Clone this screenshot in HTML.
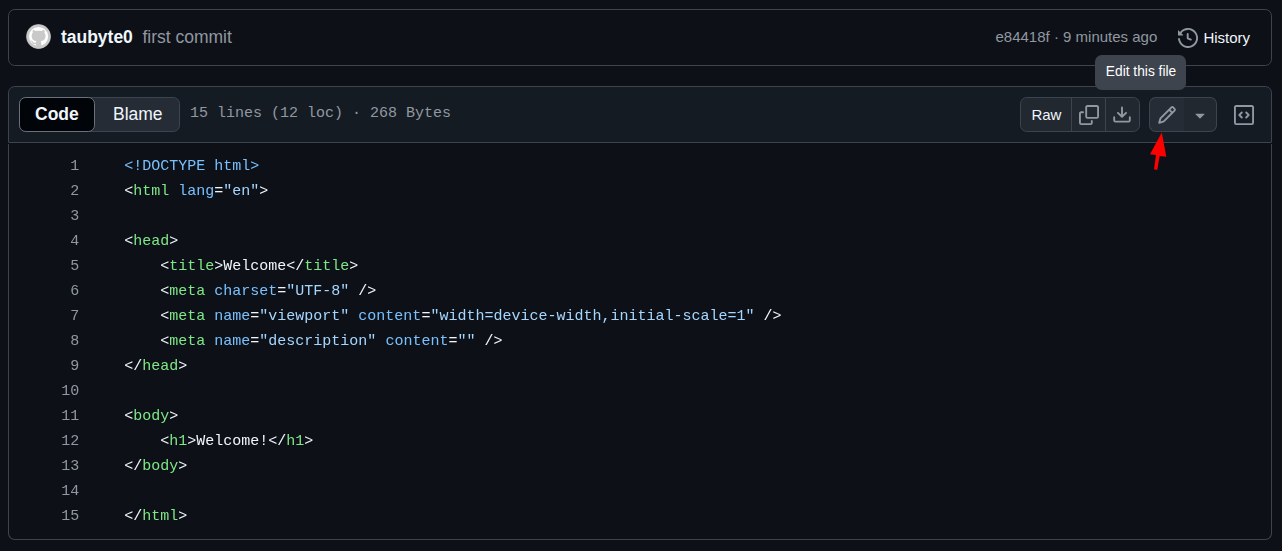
<!DOCTYPE html>
<html lang="en">
<head>
<meta charset="utf-8">
<title>index.html</title>
<style>
*{box-sizing:border-box;margin:0;padding:0}
html,body{width:1282px;height:551px;overflow:hidden;background:#0d1117}
body{position:relative;font-family:"Liberation Sans",Arial,sans-serif;color:#f0f6fc;font-size:17.5px}
.abs{position:absolute}
.commit{left:8px;top:9px;width:1264px;height:57px;border:1px solid #3d444d;border-radius:6.75px;background:#0d1117}
.avatar{left:26px;top:24px;width:25px;height:25px}
.author{left:60.9px;top:26px;font-weight:bold;font-size:17.5px;line-height:22px;white-space:nowrap}
.msg{left:142.4px;top:26px;font-size:17.5px;line-height:22px;color:#9198a1;white-space:nowrap}
.meta{left:995.5px;top:27px;font-size:15px;line-height:20px;color:#9198a1;white-space:nowrap}
.hist-ic{left:1178px;top:28px;width:20px;height:20px;fill:#9198a1}
.hist{left:1203.4px;top:28px;font-size:15px;line-height:20px;color:#f0f6fc;white-space:nowrap}
.file{left:8px;top:144px;width:1264px;height:396px;border:1px solid #3d444d;border-top:0;border-radius:0 0 6.75px 6.75px;background:#0d1117}
.fhead{left:8px;top:86px;width:1264px;height:57px;background:#151b23;border:1px solid #3d444d;border-radius:6.75px 6.75px 1px 1px}
.seg{left:19px;top:97px;width:161px;height:35px;background:#262c36;border:1px solid #3d444d;border-radius:6.75px}
.seg-sel{left:19px;top:97px;width:76px;height:35px;background:#010409;border:1px solid #6a717b;border-radius:6.75px}
.seg-t{font-size:17.5px;line-height:35px;top:97px;white-space:nowrap}
.info{left:190px;top:103px;font-family:"Liberation Mono",monospace;font-size:15px;line-height:22px;color:#9198a1;white-space:pre}
.btn{background:#212830;border:1px solid #3d444d;height:35px;top:97px}
.ic{width:20px;height:20px;fill:#9198a1}
.tip{left:1095px;top:55px;width:91px;height:35px;border-radius:6.75px;background:#3d444d;color:#fff;font-size:13.75px;line-height:33px;text-align:center;white-space:nowrap;padding-left:1px}
.ln{left:20px;width:59.25px;text-align:right;font-family:"Liberation Mono",monospace;font-size:15px;line-height:25px;color:#9198a1;white-space:pre;top:154px;will-change:transform}
.code{will-change:transform;left:100px;padding-left:24.25px;top:154px;font-family:"Liberation Mono",monospace;font-size:15px;line-height:25px;color:#f0f6fc;white-space:pre}
.g{color:#7ee787}.b{color:#79c0ff}.s{color:#a5d6ff}
</style>
</head>
<body>
<div class="abs commit"></div>
<div class="abs avatar"><svg viewBox="0 0 25 25" width="25" height="25" style="display:block;overflow:visible"><circle cx="12.5" cy="12.5" r="12.5" fill="rgba(201,201,201,0.45)"/><circle cx="12.5" cy="12.5" r="11.9" fill="#c9c9c9"/><path fill="#fff" transform="translate(1.720 1.420) scale(1.360)" d="M8 0c4.42 0 8 3.58 8 8a8.013 8.013 0 0 1-5.45 7.59c-.4.08-.55-.17-.55-.38 0-.27.01-1.13.01-2.2 0-.75-.25-1.23-.54-1.48 1.78-.2 3.65-.88 3.65-3.95 0-.88-.31-1.59-.82-2.15.08-.2.36-1.02-.08-2.12 0 0-.67-.22-2.2.82-.64-.18-1.32-.27-2-.27-.68 0-1.36.09-2 .27-1.53-1.03-2.2-.82-2.2-.82-.44 1.1-.16 1.92-.08 2.12-.51.56-.82 1.28-.82 2.15 0 3.06 1.86 3.75 3.64 3.95-.23.2-.44.55-.51 1.07-.46.21-1.61.55-2.33-.66-.15-.24-.6-.83-1.23-.82-.67.01-.27.38.01.53.34.19.73.9.82 1.13.16.45.68 1.31 2.69.94 0 .67.01 1.3.01 1.49 0 .21-.15.45-.55.38A7.995 7.995 0 0 1 0 8c0-4.42 3.58-8 8-8Z"/><circle cx="12.55" cy="12.6" r="10.75" fill="none" stroke="#c9c9c9" stroke-width="2.4"/></svg></div>
<div class="abs author">taubyte0</div>
<div class="abs msg">first commit</div>
<div class="abs meta">e84418f · 9 minutes ago</div>
<svg class="abs hist-ic" viewBox="0 0 16 16"><path d="m.427 1.927 1.215 1.215a8.002 8.002 0 1 1-1.6 5.685.75.75 0 1 1 1.493-.154 6.5 6.5 0 1 0 1.18-4.458l1.358 1.358A.25.25 0 0 1 3.896 6H.25A.25.25 0 0 1 0 5.75V2.104a.25.25 0 0 1 .427-.177ZM7.75 4a.75.75 0 0 1 .75.75v2.992l2.028.812a.75.75 0 0 1-.557 1.392l-2.5-1A.751.751 0 0 1 7 8.25v-3.5A.75.75 0 0 1 7.75 4Z"/></svg>
<div class="abs hist">History</div>

<div class="abs file"></div>
<div class="abs fhead"></div>
<div class="abs seg"></div>
<div class="abs seg-sel"></div>
<div class="abs seg-t" style="left:35px;font-weight:bold">Code</div>
<div class="abs seg-t" style="left:113px">Blame</div>
<div class="abs info">15 lines (12 loc) · 268 Bytes</div>

<div class="abs btn" style="left:1020px;width:52px;border-radius:6.75px 0 0 6.75px;font-size:15px;line-height:33px;text-align:center;padding-left:0.8px">Raw</div>
<div class="abs btn" style="left:1071px;width:35px;border-radius:0"></div>
<div class="abs btn" style="left:1105px;width:35px;border-radius:0 6.75px 6.75px 0"></div>
<svg class="abs ic" style="left:1079px;top:105px" viewBox="0 0 16 16"><path d="M0 6.75C0 5.784.784 5 1.75 5h1.5a.75.75 0 0 1 0 1.5h-1.5a.25.25 0 0 0-.25.25v7.5c0 .138.112.25.25.25h7.5a.25.25 0 0 0 .25-.25v-1.5a.75.75 0 0 1 1.5 0v1.5A1.75 1.75 0 0 1 9.25 16h-7.5A1.75 1.75 0 0 1 0 14.25Z"/><path d="M5 1.75C5 .784 5.784 0 6.75 0h7.5C15.216 0 16 .784 16 1.75v7.5A1.75 1.75 0 0 1 14.25 11h-7.5A1.75 1.75 0 0 1 5 9.25Zm1.75-.25a.25.25 0 0 0-.25.25v7.5c0 .138.112.25.25.25h7.5a.25.25 0 0 0 .25-.25v-7.5a.25.25 0 0 0-.25-.25Z"/></svg>
<svg class="abs ic" style="left:1112px;top:105px" viewBox="0 0 16 16"><path d="M2.75 14A1.75 1.75 0 0 1 1 12.25v-2.5a.75.75 0 0 1 1.5 0v2.5c0 .138.112.25.25.25h10.5a.25.25 0 0 0 .25-.25v-2.5a.75.75 0 0 1 1.5 0v2.5A1.75 1.75 0 0 1 13.25 14Z"/><path d="M7.25 7.689V2a.75.75 0 0 1 1.5 0v5.689l1.97-1.969a.749.749 0 1 1 1.06 1.06l-3.25 3.25a.749.749 0 0 1-1.06 0L4.22 6.78a.749.749 0 1 1 1.06-1.06l1.97 1.969Z"/></svg>

<div class="abs btn" style="left:1149px;width:35px;border-radius:6.75px 0 0 6.75px;border-right:0;background:#262c36"></div>
<div class="abs btn" style="left:1184px;width:33px;border-radius:0 6.75px 6.75px 0;border-left:0"></div>
<svg class="abs ic" style="left:1157px;top:105px" viewBox="0 0 16 16"><path d="M11.013 1.427a1.75 1.75 0 0 1 2.474 0l1.086 1.086a1.75 1.75 0 0 1 0 2.474l-8.61 8.61c-.21.21-.47.364-.756.445l-3.251.93a.75.75 0 0 1-.927-.928l.929-3.25c.081-.286.235-.547.445-.758l8.61-8.61Zm.176 4.823L9.75 4.81l-6.286 6.287a.253.253 0 0 0-.064.108l-.558 1.953 1.953-.558a.253.253 0 0 0 .108-.064Zm1.238-3.763a.25.25 0 0 0-.354 0L10.811 3.75l1.439 1.44 1.263-1.263a.25.25 0 0 0 0-.354Z"/></svg>
<svg class="abs ic" style="left:1190px;top:105px" viewBox="0 0 16 16"><path d="m4.427 7.427 3.396 3.396a.25.25 0 0 0 .354 0l3.396-3.396A.25.25 0 0 0 11.396 7H4.604a.25.25 0 0 0-.177.427Z"/></svg>
<svg class="abs ic" style="left:1234px;top:105px" viewBox="0 0 16 16"><path d="M0 1.75C0 .784.784 0 1.75 0h12.5C15.216 0 16 .784 16 1.75v12.5A1.75 1.75 0 0 1 14.25 16H1.75A1.75 1.75 0 0 1 0 14.25Zm1.75-.25a.25.25 0 0 0-.25.25v12.5c0 .138.112.25.25.25h12.5a.25.25 0 0 0 .25-.25V1.75a.25.25 0 0 0-.25-.25Zm7.47 3.97a.75.75 0 0 1 1.06 0l2 2a.75.75 0 0 1 0 1.06l-2 2a.749.749 0 0 1-1.275-.326.749.749 0 0 1 .215-.734L10.69 8 9.22 6.53a.75.75 0 0 1 0-1.06ZM6.78 6.53 5.31 8l1.47 1.47a.749.749 0 0 1-.326 1.275.749.749 0 0 1-.734-.215l-2-2a.75.75 0 0 1 0-1.06l2-2a.751.751 0 0 1 1.042.018.751.751 0 0 1 .018 1.042Z"/></svg>

<div class="abs tip">Edit this file</div>
<svg class="abs" style="left:1140px;top:125px" width="40" height="50" viewBox="0 0 40 50"><path fill="#ff0000" d="M21.8 7.4 L26.3 31.8 L19.7 30.9 L17.2 44.9 L14 44.3 L16 30.1 L10 29.2 Z"/></svg>

<div class="abs ln">1
2
3
4
5
6
7
8
9
10
11
12
13
14
15</div>
<div class="abs code"><span class="b">&lt;!DOCTYPE html&gt;</span>
&lt;<span class="g">html</span> <span class="b">lang</span>=<span class="s">"en"</span>&gt;

&lt;<span class="g">head</span>&gt;
    &lt;<span class="g">title</span>&gt;Welcome&lt;/<span class="g">title</span>&gt;
    &lt;<span class="g">meta</span> <span class="b">charset</span>=<span class="s">"UTF-8"</span> /&gt;
    &lt;<span class="g">meta</span> <span class="b">name</span>=<span class="s">"viewport"</span> <span class="b">content</span>=<span class="s">"width=device-width,initial-scale=1"</span> /&gt;
    &lt;<span class="g">meta</span> <span class="b">name</span>=<span class="s">"description"</span> <span class="b">content</span>=<span class="s">""</span> /&gt;
&lt;/<span class="g">head</span>&gt;

&lt;<span class="g">body</span>&gt;
    &lt;<span class="g">h1</span>&gt;Welcome!&lt;/<span class="g">h1</span>&gt;
&lt;/<span class="g">body</span>&gt;

&lt;/<span class="g">html</span>&gt;</div>
</body>
</html>
